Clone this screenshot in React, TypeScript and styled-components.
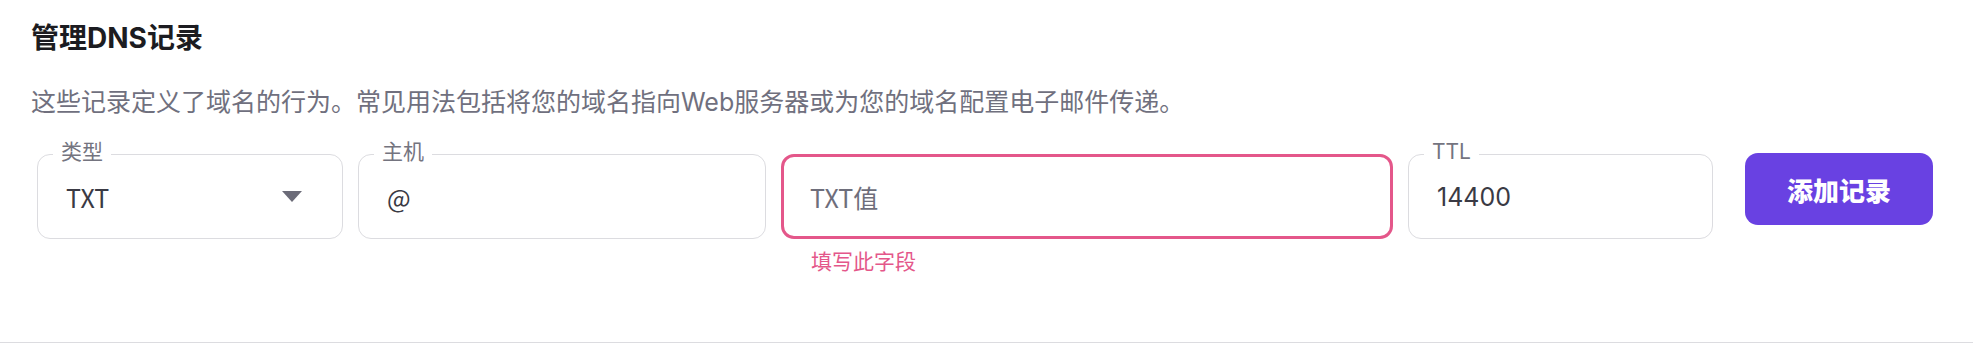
import React from "react";
import styled, { createGlobalStyle } from "styled-components";

const GlobalStyle = createGlobalStyle`
  html, body {
    margin: 0;
    padding: 0;
    background: #ffffff;
  }
  body {
    font-family: "Inter", "Noto Sans CJK SC", sans-serif;
    -webkit-font-smoothing: antialiased;
  }
  * { box-sizing: border-box; }
`;

const Section = styled.section`
  height: 343px;
  padding: 20px 31px 0 31px;
  border-bottom: 1px solid #dcdce0;
  display: flex;
  flex-direction: column;
`;

const Title = styled.h2`
  margin: 0;
  font-family: "Inter", "Noto Sans CJK SC", sans-serif;
  font-size: 28px;
  line-height: 36px;
  font-weight: 700;
  color: #1c1c21;
`;

const Description = styled.p`
  margin: 29px 0 0 0;
  font-family: "Inter", "Noto Sans CJK SC", sans-serif;
  font-size: 25px;
  line-height: 34px;
  font-weight: 400;
  color: #70707e;
`;

const FormRow = styled.div`
  margin: 35px 0 0 6px;
  display: flex;
  align-items: flex-start;
  gap: 15px;
`;

const FieldColumn = styled.div<{ $width: number }>`
  width: ${(p) => p.$width}px;
  flex: none;
  display: flex;
  flex-direction: column;
`;

const FieldBox = styled.div<{ $error?: boolean }>`
  position: relative;
  height: 85px;
  border-radius: 13px;
  border: ${(p) => (p.$error ? "3px solid #e4578a" : "1px solid #dcdce0")};
  padding: 0 38px 0 ${(p) => (p.$error ? 26 : 28)}px;
  display: flex;
  align-items: center;
  justify-content: space-between;
  background: #ffffff;
`;

const FloatLabel = styled.span`
  position: absolute;
  top: -14px;
  left: 15px;
  padding: 0 8px;
  background: #ffffff;
  font-family: "Inter", "Noto Sans CJK SC", sans-serif;
  font-size: 21px;
  line-height: 21px;
  color: #74747f;
`;

const Value = styled.span<{ $cjkLatin?: boolean; $placeholder?: boolean }>`
  font-family: ${(p) =>
    p.$cjkLatin
      ? '"Noto Sans CJK SC", sans-serif'
      : '"Inter", "Noto Sans CJK SC", sans-serif'};
  font-size: 25px;
  line-height: 32px;
  color: ${(p) => (p.$placeholder ? "#6e6e7b" : "#3a3a44")};
`;

const Caret = styled.svg`
  width: 20px;
  height: 11px;
  flex: none;
  margin-right: 2px;
`;

const ErrorText = styled.div`
  margin: 9px 0 0 30px;
  font-family: "Noto Sans CJK SC", sans-serif;
  font-size: 21px;
  line-height: 25px;
  color: #e4578a;
`;

const SubmitButton = styled.button`
  flex: none;
  margin: -1px 0 0 17px;
  width: 188px;
  height: 72px;
  border: none;
  border-radius: 13px;
  background: #6941e2;
  color: #ffffff;
  font-family: "Noto Sans CJK SC", sans-serif;
  font-size: 26px;
  font-weight: 900;
  cursor: pointer;
`;

export default function App() {
  return (
    <>
      <GlobalStyle />
      <Section>
        <Title>管理DNS记录</Title>
        <Description>
          这些记录定义了域名的行为。常见用法包括将您的域名指向Web服务器或为您的域名配置电子邮件传递。
        </Description>
        <FormRow>
          <FieldColumn $width={306}>
            <FieldBox>
              <FloatLabel>类型</FloatLabel>
              <Value $cjkLatin>TXT</Value>
              <Caret viewBox="0 0 20 11">
                <polygon points="0,0 20,0 10,11" fill="#6b6b78" />
              </Caret>
            </FieldBox>
          </FieldColumn>
          <FieldColumn $width={408}>
            <FieldBox>
              <FloatLabel>主机</FloatLabel>
              <Value $cjkLatin>@</Value>
            </FieldBox>
          </FieldColumn>
          <FieldColumn $width={612}>
            <FieldBox $error>
              <Value $cjkLatin $placeholder>TXT值</Value>
            </FieldBox>
            <ErrorText>填写此字段</ErrorText>
          </FieldColumn>
          <FieldColumn $width={305}>
            <FieldBox>
              <FloatLabel>TTL</FloatLabel>
              <Value>14400</Value>
            </FieldBox>
          </FieldColumn>
          <SubmitButton>添加记录</SubmitButton>
        </FormRow>
      </Section>
    </>
  );
}
